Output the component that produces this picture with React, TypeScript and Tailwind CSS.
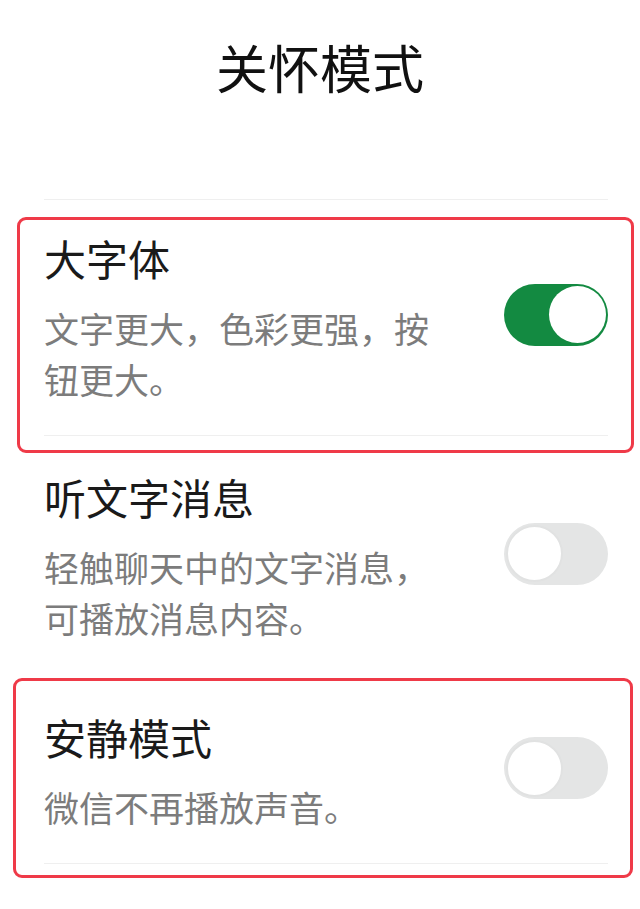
import React from "react";

function Toggle({ on }: { on: boolean }) {
  if (on) {
    return (
      <div className="w-[104px] h-[62px] shrink-0 mb-[12px] rounded-full bg-[#138a41] flex items-center justify-end pr-[2px]">
        <div className="w-[57px] h-[57px] rounded-full bg-white" />
      </div>
    );
  }
  return (
    <div className="w-[104px] h-[62px] shrink-0 mb-[12px] rounded-full bg-[#e4e5e5] flex items-center pl-[2px]">
      <div className="w-[57px] h-[57px] rounded-full bg-white border-2 border-[#e1e2e2]" />
    </div>
  );
}

function Item({ title, desc, on }: { title: string; desc: string; on: boolean }) {
  return (
    <div className="flex items-center justify-between">
      <div className="w-[400px]">
        <div className="text-[42px] leading-none text-[#1a1a1a]">{title}</div>
        <div className="mt-[23px] text-[35px] leading-[51px] text-[#7c7c7c]">{desc}</div>
      </div>
      <Toggle on={on} />
    </div>
  );
}

export default function App() {
  return (
    <div className="w-[640px] h-[909px] bg-white font-['Noto_Sans_CJK_SC','Noto_Sans',sans-serif] overflow-hidden">
      {/* header */}
      <div className="h-[199px] pt-[41px] flex justify-center">
        <h1 className="text-[52px] leading-none text-[#111111]">关怀模式</h1>
      </div>
      <div className="ml-[44px] mr-[32px] h-px bg-[#efefef]" />

      {/* 大字体 */}
      <div className="mt-[17px] ml-[17px] mr-[6px] border-[3px] border-[#ef3a48] rounded-[9px] pl-[24px] pr-[23px]">
        <div className="pt-[17px] pb-[31px]">
          <Item title="大字体" desc="文字更大，色彩更强，按钮更大。" on />
        </div>
        <div className="h-px bg-[#efefef]" />
        <div className="h-[14px]" />
      </div>

      {/* 听文字消息 */}
      <div className="mt-[23px] pl-[44px] pr-[32px]">
        <Item title="听文字消息" desc="轻触聊天中的文字消息，可播放消息内容。" on={false} />
      </div>

      {/* 安静模式 */}
      <div className="mt-[35px] ml-[13px] mr-[7px] border-[3px] border-[#ef3a48] rounded-[9px] pl-[28px] pr-[22px]">
        <div className="pt-[35px] pb-[31px]">
          <Item title="安静模式" desc="微信不再播放声音。" on={false} />
        </div>
        <div className="h-px bg-[#efefef]" />
        <div className="h-[11px]" />
      </div>
    </div>
  );
}
